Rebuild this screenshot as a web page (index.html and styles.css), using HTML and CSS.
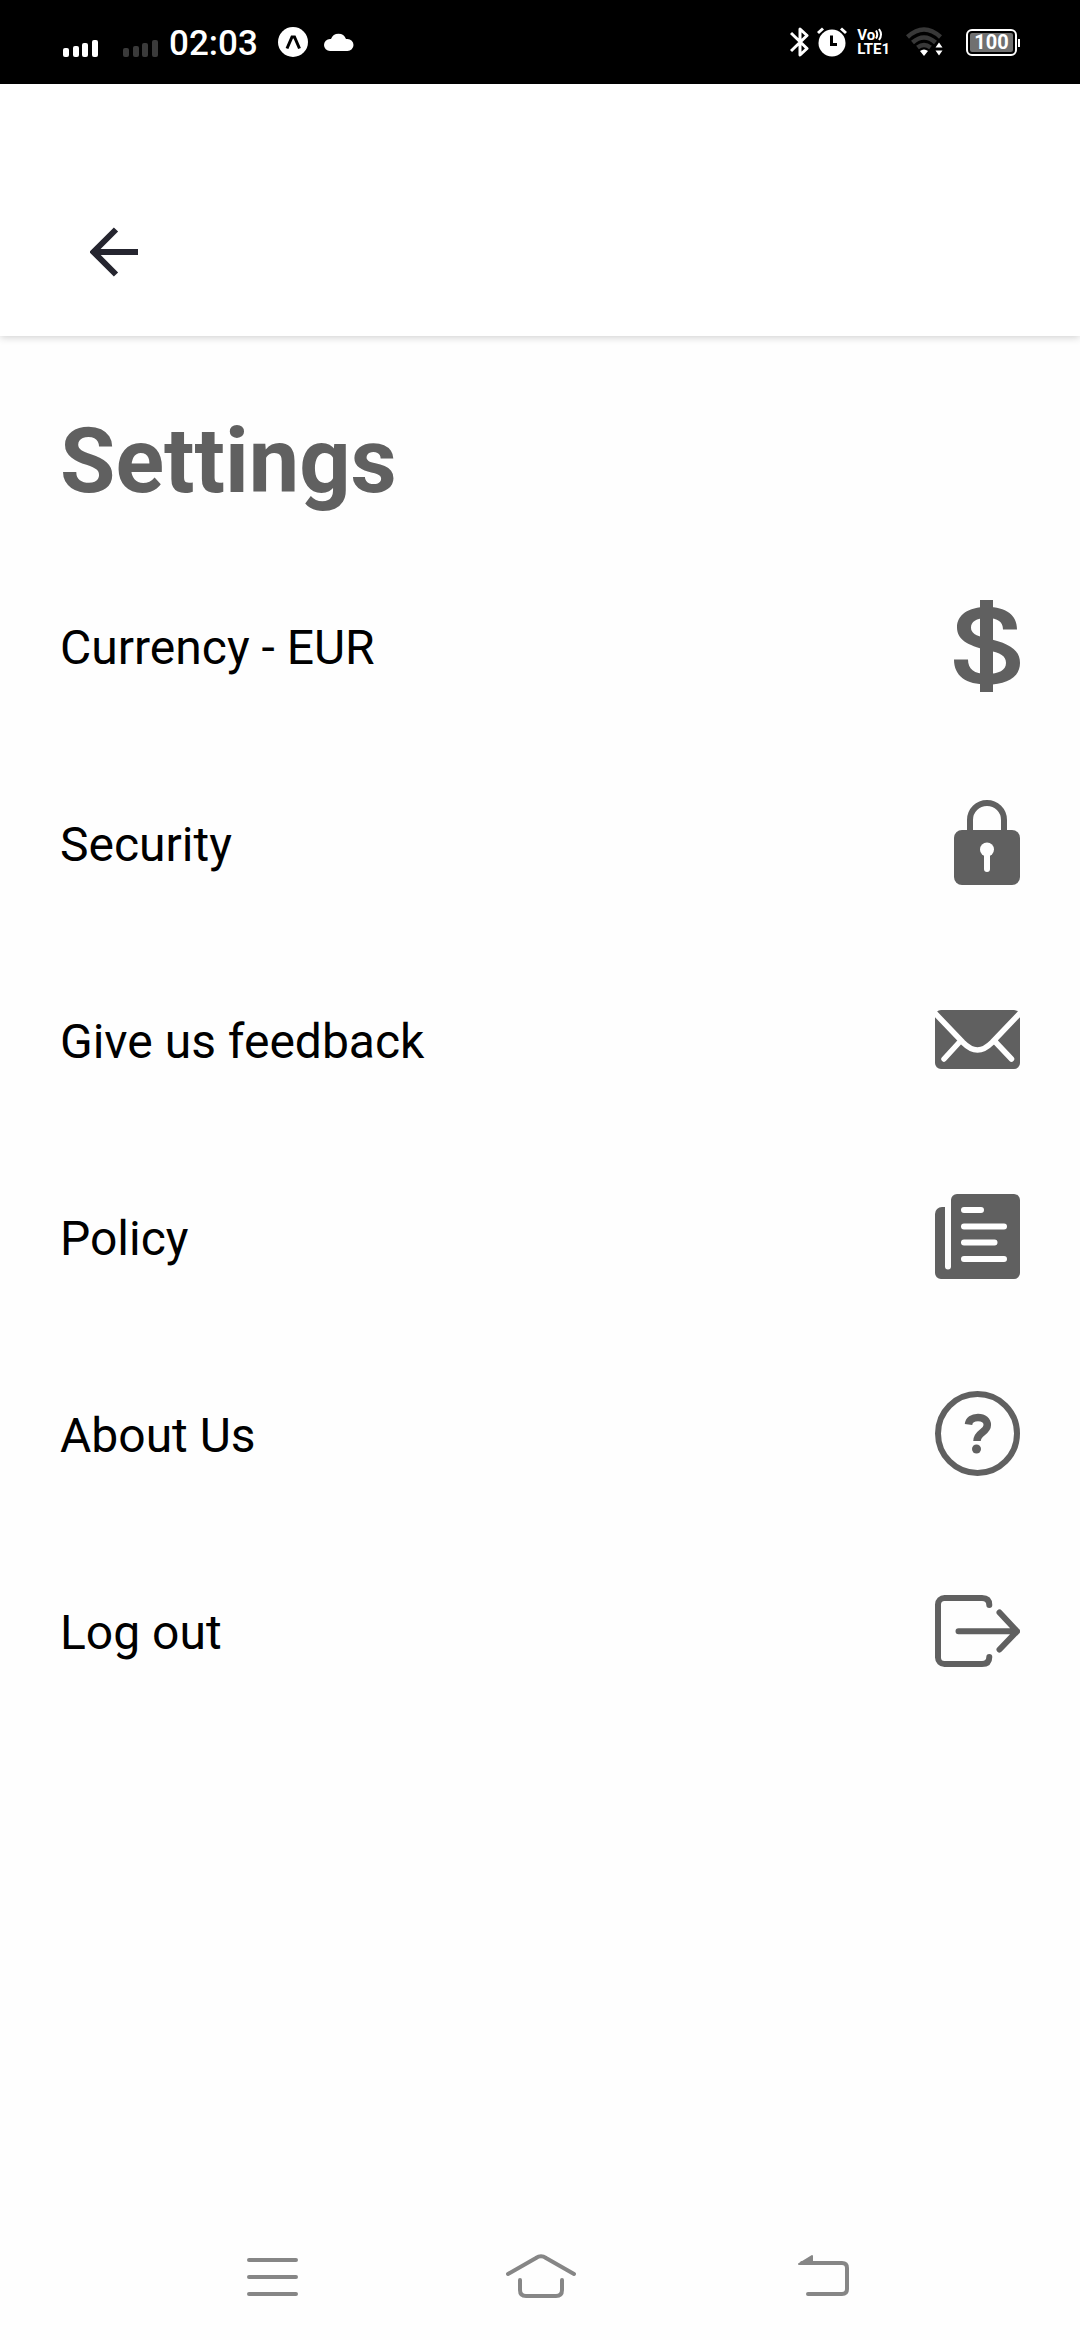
FILE: index.html
```html
<!DOCTYPE html>
<html lang="en">
<head>
<meta charset="utf-8">
<meta name="viewport" content="width=device-width, initial-scale=1">
<title>Settings</title>
<link rel="stylesheet" href="styles.css">
</head>
<body>
<div class="status">
  <div class="status-group status-left">
    <svg class="signal" width="36" height="18" viewBox="0 0 36 18" aria-hidden="true"><rect x="0" y="8" width="6" height="9" rx="2"/><rect x="10" y="6" width="6" height="11" rx="2"/><rect x="19" y="3" width="6" height="14" rx="2"/><rect x="29" y="0" width="6" height="17" rx="2"/></svg>
    <svg class="signal signal-off" width="36" height="18" viewBox="0 0 36 18" aria-hidden="true"><rect x="0" y="8" width="6" height="9" rx="2"/><rect x="10" y="6" width="6" height="11" rx="2"/><rect x="19" y="3" width="6" height="14" rx="2"/><rect x="29" y="0" width="6" height="17" rx="2"/></svg>
    <span class="clock">02:03</span>
    <svg class="expo" width="30" height="30" viewBox="0 0 30 30" aria-hidden="true"><circle cx="15" cy="15" r="15" fill="#fff"/><path d="M9 21.500L14 10h2.500L21.500 21.500" fill="none" stroke="#000" stroke-width="3"/></svg>
    <svg width="30" height="20" viewBox="0 0 30 20" aria-hidden="true"><path d="M6 19a6 6 0 0 1 0-12h1a8 8 0 0 1 15 0h1.500a6 6 0 0 1 0 12z" fill="#fff"/></svg>
  </div>
  <div class="status-group status-right">
    <svg class="bluetooth" width="20" height="30" viewBox="0 0 20 30" aria-hidden="true"><path d="M1 6l16 15.500-7 6.500V2l7 6.500L1 24" fill="none" stroke="#fff" stroke-width="3" stroke-linejoin="round"/></svg>
    <svg width="30" height="30" viewBox="0 0 30 30" aria-hidden="true"><circle cx="15" cy="16" r="13.500" fill="#fff"/><path d="M1 6l5-4.500M29 6l-5-4.500" stroke="#fff" stroke-width="3"/><path d="M14.500 8.500v9H20" fill="none" stroke="#000" stroke-width="3"/></svg>
    <div class="volte"><span class="volte-line">Vo<svg width="8" height="13" viewBox="0 0 8 13" aria-hidden="true"><path d="M1 2.500q2.500 4 0 8M4 1q4 5.500 0 11" fill="none" stroke="#fff" stroke-width="2"/></svg></span><span class="volte-line">LTE1</span></div>
    <svg class="wifi" width="38" height="30" viewBox="0 0 38 30" aria-hidden="true"><g fill="none" stroke="#383838" stroke-width="4.500"><path d="M1.500 10q16.500-15 33 0M6.500 15.500q11.500-10 23 0M11.500 20.500q6.500-5 13 0"/></g><path d="M14 24q4-3 8 0l-4 5zM29.500 20.500h7l-3.500-5zM29.500 23.500h7l-3.500 5z" fill="#fff"/></svg>
    <div class="battery"><span class="battery-level">100</span></div>
  </div>
</div>

<header class="appbar">
  <button class="back" type="button" aria-label="Back">
    <svg width="48" height="50" viewBox="0 0 48 50" aria-hidden="true"><path d="M26 2.500L3.500 25 26 47.500M4 25H48" fill="none" stroke="#25252f" stroke-width="6"/></svg>
  </button>
</header>

<main class="settings">
  <h1 class="title">Settings</h1>
  <nav class="list" aria-label="Settings">
    <a class="row" href="#currency"><span class="label">Currency - EUR</span>
      <svg width="66" height="92" viewBox="0 0 66 92" aria-hidden="true"><path fill="#606060" d="M63 29.500H49C49 22 44 18 33 18 22 18 17 22 17 27.500 17 33 21 35.500 33 38.500 54 43 66 49 66 63 66 77 53 84.500 33 84.500 12 84.500 0 76 0 59.500H14C14 69 20 74 33 74 45 74 52 70 52 63 52 56 47 53 33 50 13 45.500 3 39 3 27.500 3 15 14 7 33 7 52 7 63 15 63 29.500z"/><path fill="#606060" d="M26 0h13v92H26z"/></svg></a>
    <a class="row" href="#security"><span class="label">Security</span>
      <svg width="66" height="86" viewBox="0 0 66 86" aria-hidden="true"><rect y="30" width="66" height="55" rx="8" fill="#606060"/><path d="M16 31V20a17 17 0 0 1 34 0v11" fill="none" stroke="#606060" stroke-width="6"/><circle cx="33" cy="49.500" r="7" fill="#fff"/><path d="M33 52v17" stroke="#fff" stroke-width="6" stroke-linecap="round"/></svg></a>
    <a class="row" href="#feedback"><span class="label">Give us feedback</span>
      <svg width="85" height="59" viewBox="0 0 85 59" aria-hidden="true"><rect width="85" height="59" rx="6" fill="#606060"/><path d="M-3 0L28 32.500Q35.500 40 42.500 40T57 32.500L88 0M25.500 31L9 49M59.500 31L76.500 49" fill="none" stroke="#fff" stroke-width="5.500" stroke-linecap="round"/></svg></a>
    <a class="row" href="#policy"><span class="label">Policy</span>
      <svg width="85" height="85" viewBox="0 0 85 85" aria-hidden="true"><path d="M10 13H7a7 7 0 0 0-7 7v59a6 6 0 0 0 6 6h73a6 6 0 0 0 6-6V6a6 6 0 0 0-6-6H22a6 6 0 0 0-6 6v66.500a3 3 0 0 1-6 0z" fill="#606060"/><path d="M29 16h17M29 32.500h40M29 48.500h30.500M29 65h40" stroke="#fff" stroke-width="6" stroke-linecap="round"/></svg></a>
    <a class="row" href="#about"><span class="label">About Us</span>
      <svg width="85" height="85" viewBox="0 0 85 85" aria-hidden="true"><g fill="none" stroke="#606060"><circle cx="42.500" cy="42.500" r="39.500" stroke-width="6"/><path d="M33.500 33.500C34 29 37.500 26.500 43 26.500 49 26.500 52.300 29.500 52.300 34 52.300 41.500 42 41 42 50" stroke-width="7.500"/></g><circle cx="41.500" cy="58" r="4.500" fill="#606060"/></svg></a>
    <a class="row" href="#logout"><span class="label">Log out</span>
      <svg width="85" height="72" viewBox="0 0 85 72" aria-hidden="true"><path d="M54.300 10Q54.300 3 47 3H9.500a6.500 6.500 0 0 0-6.500 6.500v53a6.500 6.500 0 0 0 6.500 6.500H47Q54.300 69 54.300 62M23.500 36.300H82M64.500 17.500L82 36.300 64.500 54.500" fill="none" stroke="#606060" stroke-width="6" stroke-linecap="round" stroke-linejoin="round"/></svg></a>
  </nav>
</main>

<footer class="sysnav">
  <button type="button" aria-label="Recent apps"><svg width="96" height="60" viewBox="0 0 96 60" aria-hidden="true"><path d="M27 13h47M27 30h47M27 47h47" stroke="#868686" stroke-width="4" stroke-linecap="round"/></svg></button>
  <button type="button" aria-label="Home"><svg width="96" height="60" viewBox="0 0 96 60" aria-hidden="true"><path d="M16 27L44 11Q49 7.500 54 11L82 27M28 33V43q0 6 6 6H64q6 0 6-6V33" fill="none" stroke="#868686" stroke-width="4" stroke-linecap="round"/></svg></button>
  <button type="button" aria-label="Back"><svg width="96" height="60" viewBox="0 0 96 60" aria-hidden="true"><path d="M40 16H80q5 0 5 5V42q0 5-5 5H46" fill="none" stroke="#868686" stroke-width="4" stroke-linecap="round"/><path d="M37 17L50 9v8z" fill="#868686" stroke="#868686" stroke-width="2" stroke-linejoin="round"/></svg></button>
</footer>
</body>
</html>
```
FILE: styles.css
```css
* { box-sizing: border-box; }

body {
  margin: 0;
  min-height: 100vh;
  display: flex;
  flex-direction: column;
  background: #fefefe;
  color: #000;
  font-family: Roboto, "Liberation Sans", sans-serif;
}

svg { display: block; flex: none; }

button {
  display: flex;
  align-items: center;
  justify-content: center;
  padding: 0;
  border: 0;
  background: none;
}

/* Phone status bar */
.status {
  display: flex;
  justify-content: space-between;
  height: 84px;
  padding: 0 60px 0 63px;
  background: #000;
  color: #fff;
}

.status-group { display: flex; align-items: center; }
.status-left { gap: 16px; }
.status-right { gap: 10px; }

.signal { fill: #fff; margin-top: 14px; }
.signal-off { fill: #3a3a3a; margin: 14px -6px 0 8px; }

.clock {
  font-size: 35px;
  font-weight: 500;
  line-height: 42px;
  margin-top: 4px;
}

.expo { margin-left: 4px; }

.bluetooth { margin-right: -3px; }

.volte {
  display: flex;
  flex-direction: column;
  font-size: 15px;
  font-weight: 700;
  line-height: 14px;
}

.volte-line { display: flex; }

.wifi { margin: 0 12px 0 6px; }

.battery {
  position: relative;
  width: 51px;
  height: 27px;
  margin-right: 3px;
  padding: 2px;
  border: 2px solid #fff;
  border-radius: 6px;
}

.battery::after {
  content: "";
  position: absolute;
  top: 8px;
  right: -5px;
  width: 2px;
  height: 8px;
  background: #fff;
}

.battery-level {
  display: block;
  background: #707070;
  border-radius: 2px;
  font-size: 20px;
  font-weight: 700;
  line-height: 19px;
  text-align: center;
}

/* App bar */
.appbar {
  display: flex;
  padding: 84px 60px 0;
  background: #fff;
  box-shadow: 0 1px 8px rgba(0, 0, 0, 0.2);
}

.back { width: 108px; height: 168px; }

/* Settings list */
.settings { flex: 1; padding: 73px 60px 0; }

.title {
  margin: 0 0 32px;
  color: #606060;
  font-size: 90px;
  font-weight: 700;
  line-height: 106px;
}

.list { display: flex; flex-direction: column; }

.row {
  display: flex;
  align-items: center;
  justify-content: space-between;
  height: 197px;
  color: inherit;
  text-decoration: none;
}

.label { padding-top: 4px; font-size: 48px; line-height: 56px; }

/* Phone navigation bar */
.sysnav {
  display: grid;
  grid-template-columns: repeat(3, 1fr);
  height: 126px;
  padding: 0 12.5%;
}
```
